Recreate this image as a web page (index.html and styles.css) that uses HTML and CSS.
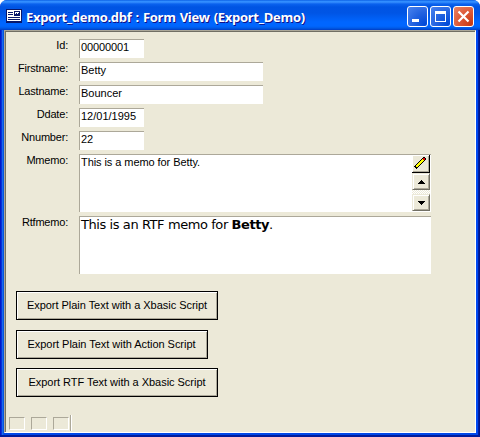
FILE: index.html
```html
<!DOCTYPE html>
<html lang="en">
<head>
<meta charset="utf-8">
<title>Export_demo.dbf : Form View (Export_Demo)</title>
<link rel="stylesheet" href="styles.css">
</head>
<body>
<div class="window">
  <header class="titlebar">
    <svg class="app-icon" width="16" height="14" viewBox="0 0 16 14" shape-rendering="crispEdges">
      <path fill="#08186b" d="M0 0h16v14H0z"/>
      <path fill="#fff" d="M1 1h14v11H1z"/>
      <path fill="#08186b" d="M2 3h5v1H2zM2 5h5v1H2zM8 2h6v5H8zM2 8h12v1H2zM2 10h12v1H2z"/>
      <path fill="#fff" d="M9 3h4v3H9z"/>
      <path fill="#08186b" d="M9 5h1V4h1v1h1V4h1v2H9z"/>
    </svg>
    <h1 class="title">Export_demo.dbf : Form View (Export_Demo)</h1>
    <div class="controls">
      <button class="control" aria-label="Minimize"><svg width="19" height="19" viewBox="0 0 19 19"><path fill="#fff" d="M4 12h7v3H4z"/></svg></button>
      <button class="control" aria-label="Maximize"><svg width="19" height="19" viewBox="0 0 19 19"><path fill="#fff" fill-rule="evenodd" d="M4 4h11v11H4zM5 7v7h9V7z"/></svg></button>
      <button class="control close" aria-label="Close"><svg width="19" height="19" viewBox="0 0 19 19"><path stroke="#fff" stroke-width="2.2" d="M4.5 4.5l10 10M14.5 4.5l-10 10"/></svg></button>
    </div>
  </header>
  <main class="client">
    <form class="form">
      <label>Id:</label><div class="field short digits">00000001</div>
      <label>Firstname:</label><div class="field medium">Betty</div>
      <label>Lastname:</label><div class="field medium">Bouncer</div>
      <label>Ddate:</label><div class="field short">12/01/1995</div>
      <label>Nnumber:</label><div class="field short">22</div>
      <label>Mmemo:</label>
      <div class="field memo">
        <span class="memo-text">This is a memo for Betty.</span>
        <div class="scroll">
          <div class="edit">
            <svg width="14" height="14" viewBox="0 0 14 14" shape-rendering="crispEdges">
              <path fill="none" stroke="#000" stroke-width="4" d="M2 12L12 2"/>
              <path fill="none" stroke="#ff0" stroke-width="2.2" d="M3 11L10.5 3.5"/>
              <path fill="#d00" d="M10 2h2v2h-2z"/>
            </svg>
          </div>
          <div class="arrow"><svg width="7" height="4" viewBox="0 0 7 4" shape-rendering="crispEdges"><path d="M3 0h1v1h1v1h1v1h1v1H0V3h1V2h1V1h1z"/></svg></div>
          <div class="track"></div>
          <div class="arrow"><svg width="7" height="4" viewBox="0 0 7 4" shape-rendering="crispEdges"><path d="M0 0h7v1H6v1H5v1H4v1H3V3H2V2H1V1H0z"/></svg></div>
        </div>
      </div>
      <label>Rtfmemo:</label><div class="field rtf"><span>This is an RTF memo for <b>Betty</b>.</span></div>
    </form>
    <div class="actions">
      <button class="action">Export Plain Text with a Xbasic Script</button>
      <button class="action narrow">Export Plain Text with Action Script</button>
      <button class="action last">Export RTF Text with a Xbasic Script</button>
    </div>
    <footer class="status"><i></i><i></i><i></i></footer>
  </main>
</div>
</body>
</html>
```
FILE: styles.css
```css
* { box-sizing: border-box; }
body {
  margin: 0;
  background: #fff;
  font: 11px/13px "Liberation Sans", Arial, sans-serif;
  color: #000;
}
.window {
  width: 480px;
  height: 437px;
  padding: 0 4px 4px;
  display: flex;
  flex-direction: column;
  border-radius: 7px 7px 0 0;
  background: linear-gradient(90deg, #0019c8 0 1px, #0831d9 1px 2px, #166aee 2px 3px, #0855dd 3px 4px, #0048e8 4px 476px, #0048f1 476px 478px, #001ea0 478px 479px, #00138c 479px);
  box-shadow: inset 0 -2px #001c9c;
  overflow: hidden;
}
.titlebar {
  flex: none;
  height: 30px;
  margin: 0 -4px;
  padding: 3px 6px 0 6px;
  display: flex;
  align-items: center;
  background: linear-gradient(#0855dd 0, #2a8cff 1px, #3890ff 2px, #0a62ee 4px, #0054e3 7px, #0055e5 13px, #0066ff 22px, #0066ff 26px, #005be8 28px, #003dc4 30px);
}
.app-icon { margin-top: -1px; }
.title {
  margin: 0 auto 0 4px;
  font: 700 13px/20px "Open Sans", sans-serif;
  letter-spacing: -0.3px;
  word-spacing: 1px;
  color: #fff;
  text-shadow: 1px 1px #0f1089;
  white-space: nowrap;
}
.controls { display: flex; gap: 2px; }
.control {
  width: 21px;
  height: 21px;
  padding: 0;
  border: 1px solid #fff;
  border-radius: 3px;
  background: radial-gradient(circle at 90% 90%, #0049d8 0, #2463e0 50%, #4a83ef 100%);
  display: flex;
}
.close { background: radial-gradient(circle at 90% 90%, #c83a12 0, #dc5735 50%, #e88468 100%); }
.client {
  flex: 1;
  min-height: 0;
  display: flex;
  flex-direction: column;
  padding: 1px 0 0 1px;
  background: #ece9d8;
  border: 1px solid;
  border-color: #aca899 #fff #fff #aca899;
  box-shadow: inset 1px 1px #716f64;
}
.form {
  display: grid;
  grid-template-columns: 62px 352px;
  grid-template-rows: repeat(5, 19px) 58px 58px;
  column-gap: 11px;
  row-gap: 4px;
  padding: 7px 0 0;
}
label { text-align: right; white-space: nowrap; letter-spacing: -0.2px; }
.field {
  background: #fff;
  border: 0 solid #aca899;
  border-width: 1px 0 0 1px;
  padding: 1px 0 0 1px;
  white-space: nowrap;
}
.short { width: 65px; }
.medium { width: 184px; }
.digits { letter-spacing: -0.1px; }
.memo { display: flex; justify-content: space-between; padding-top: 0; }
.memo-text { padding-top: 1px; letter-spacing: -0.07px; }
.scroll { width: 18px; height: 56px; margin-right: 1px; }
.edit {
  width: 18px;
  height: 18px;
  padding: 1px;
  background: #ece9d8;
  border: solid #000;
  border-width: 0 1px 1px 0;
  box-shadow: inset 1px 1px #fff, inset -1px -1px #aca899;
}
.edit svg { display: block; }
.arrow {
  width: 18px;
  height: 17px;
  display: flex;
  align-items: center;
  justify-content: center;
  background: #ece9d8;
  border: 1px solid;
  border-color: #ece9d8 #716f64 #716f64 #ece9d8;
  box-shadow: inset 1px 1px #fff, inset -1px -1px #aca899;
}
.track { height: 4px; background: repeating-conic-gradient(#fff 0 25%, #ece9d8 0 50%) 0 0 / 2px 2px; }
.rtf { font: 13px/16px "DejaVu Sans", Verdana, sans-serif; padding-top: 0; letter-spacing: -0.42px; }
.actions {
  margin: 17px 0 0 10px;
  display: flex;
  flex-direction: column;
  align-items: flex-start;
}
.action {
  width: 202px;
  height: 29px;
  margin: 0 0 10px;
  padding: 0;
  background: #ece9d8;
  border: 1px solid #000;
  box-shadow: inset 1px 1px #fff, inset -1px -1px #aca899;
  font: inherit;
  letter-spacing: -0.03px;
  color: #000;
  white-space: nowrap;
}
.narrow { width: 192px; margin-bottom: 9px; padding-right: 1px; }
.last { margin: 0; }
.status {
  margin-top: auto;
  margin-bottom: 1px;
  width: 65px;
  height: 16px;
  padding: 2px 0 0 3px;
  display: flex;
  gap: 6px;
  border-right: 1px solid #aca899;
  box-shadow: 1px 0 #fff;
}
.status i {
  width: 16px;
  height: 13px;
  border: 1px solid;
  border-color: #aca899 #fff #fff #aca899;
}
```
